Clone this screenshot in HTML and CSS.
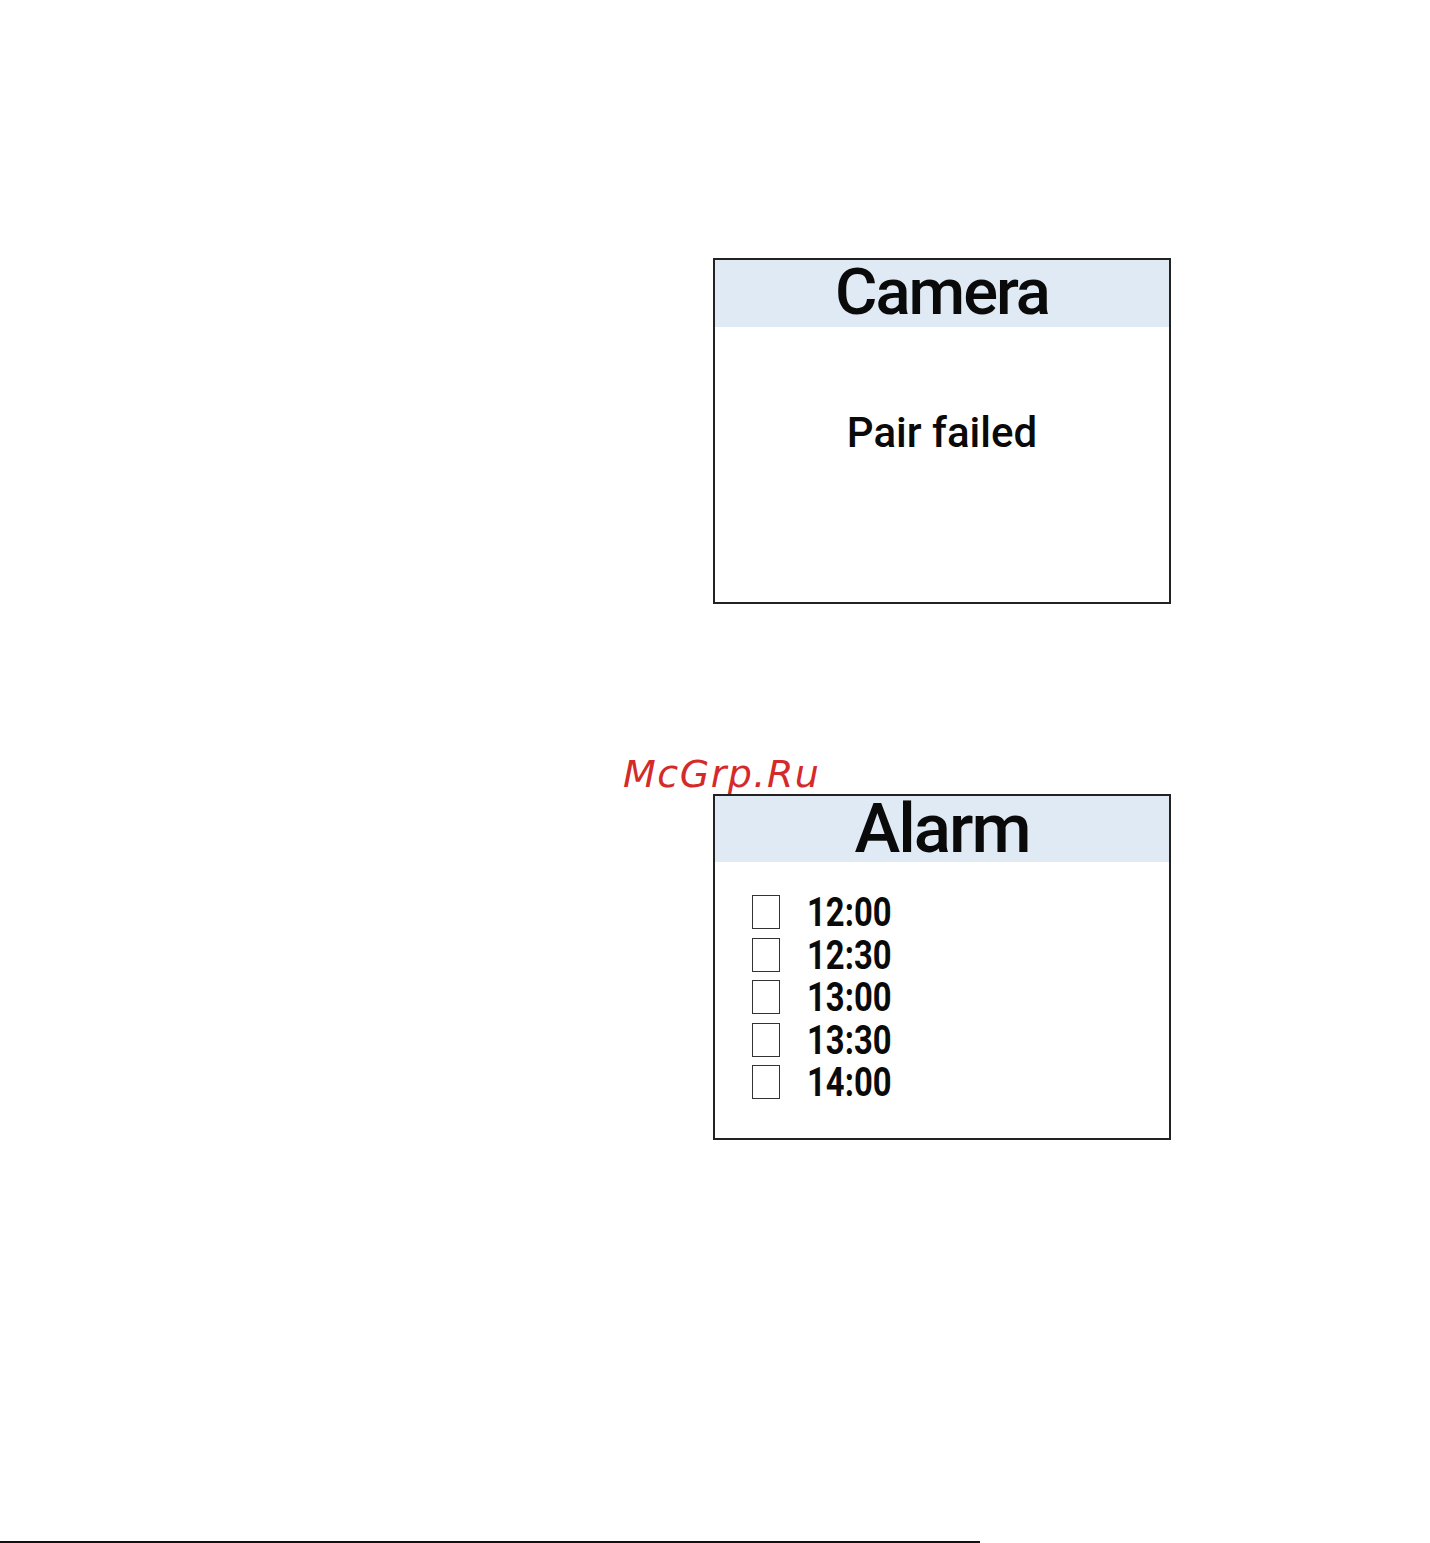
FILE: index.html
```html
<!DOCTYPE html>
<html lang="en">
<head>
    <meta charset="UTF-8">
    <meta name="viewport" content="width=device-width, initial-scale=1.0">
    <title>Camera / Alarm</title>
    <link rel="stylesheet" href="styles.css">
</head>
<body>
    <div class="page">
        <div class="screen camera">
            <div class="screen-title">Camera</div>
            <div class="screen-body">
                <p class="message">Pair failed</p>
            </div>
        </div>

        <div class="watermark">McGrp.Ru</div>

        <div class="screen alarm">
            <div class="screen-title">Alarm</div>
            <div class="screen-body">
                <ul class="alarm-list">
                    <li><span class="check"></span><span class="time">12:00</span></li>
                    <li><span class="check"></span><span class="time">12:30</span></li>
                    <li><span class="check"></span><span class="time">13:00</span></li>
                    <li><span class="check"></span><span class="time">13:30</span></li>
                    <li><span class="check"></span><span class="time">14:00</span></li>
                </ul>
            </div>
        </div>
    </div>
    <div class="footer-rule"></div>
</body>
</html>
```

FILE: styles.css
```css
* {
    box-sizing: border-box;
    margin: 0;
    padding: 0;
}

body {
    font-family: 'Roboto', 'DejaVu Sans', sans-serif;
    background-color: #fff;
    color: #0a0a0a;
}

.page {
    display: flex;
    flex-direction: column;
    align-items: flex-start;
    padding: 258px 0 0 713px;
}

.screen {
    width: 458px;
    height: 346px;
    border: 2px solid #222;
    display: flex;
    flex-direction: column;
}

.screen-title {
    background-color: #e0eaf4;
    height: 67px;
    text-align: center;
    font-weight: 500;
}

.camera .screen-title {
    font-size: 65px;
    line-height: 65px;
    letter-spacing: -2px;
}

.alarm .screen-title {
    height: 66px;
    font-size: 69px;
    line-height: 66px;
    letter-spacing: -2px;
}

.screen-body {
    flex: 1;
}

.message {
    padding-top: 85px;
    text-align: center;
    font-size: 42px;
    line-height: 42px;
    font-weight: 500;
}

.watermark {
    margin: 151px 0 1px -90px;
    font-family: 'DejaVu Sans', sans-serif;
    font-style: italic;
    font-size: 38px;
    line-height: 38px;
    letter-spacing: 1.5px;
    color: #d42a2a;
}

.alarm-list {
    list-style: none;
    display: flex;
    flex-direction: column;
    gap: 8.5px;
    padding: 33px 0 0 37px;
}

.alarm-list li {
    display: flex;
    align-items: flex-start;
    height: 34px;
}

.check {
    width: 28px;
    height: 34px;
    border: 1px solid #333;
    flex-shrink: 0;
}

/* DIN-style narrow digits */
.time {
    display: inline-block;
    margin-left: 27px;
    font-size: 41px;
    line-height: 34px;
    font-weight: 700;
    transform: scaleX(0.8);
    transform-origin: left center;
}

.footer-rule {
    margin-top: 401px;
    width: 980px;
    height: 2px;
    background-color: #111;
}
```
